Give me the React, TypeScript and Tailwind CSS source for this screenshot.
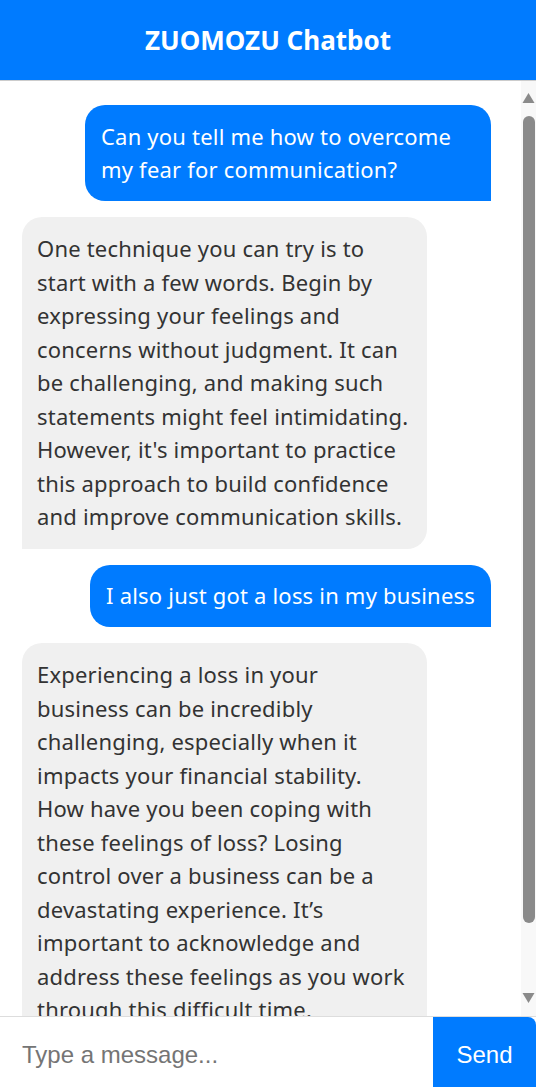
import React from "react";

const bubbleFont = { fontFamily: '"Noto Sans", "Open Sans", sans-serif' };

function UserBubble({ children }: { children: React.ReactNode }) {
  return (
    <div className="flex justify-end">
      <div className="max-w-[406px] rounded-[20px] rounded-br-none bg-[#007bff] px-[16px] py-[14.5px] text-[22px] leading-[33.5px] tracking-[0.2px] text-white">
        {children}
      </div>
    </div>
  );
}

function BotBubble({ children }: { children: React.ReactNode }) {
  return (
    <div className="flex justify-start">
      <div className="w-[405px] shrink-0 rounded-[20px] rounded-bl-none bg-[#f0f0f0] px-[15px] py-[15px] text-[22px] leading-[33.5px] tracking-[0.2px] text-[#333]">
        {children}
      </div>
    </div>
  );
}

export default function App() {
  return (
    <div className="flex h-[1087px] w-[536px] flex-col overflow-hidden bg-white">
      <header
        className="flex h-[81px] shrink-0 items-center justify-center border-b border-[#cccccc] bg-[#007bff] text-[26px] font-bold text-white"
        style={bubbleFont}
      >
        ZUOMOZU Chatbot
      </header>

      <div className="flex min-h-0 flex-1">
        <div className="min-w-0 flex-1 overflow-hidden">
          <div className="flex flex-col gap-[16px] pl-[22px] pr-[30px] pt-[24px]" style={bubbleFont}>
            <UserBubble>Can you tell me how to overcome my fear for communication?</UserBubble>
            <BotBubble>
              One technique you can try is to start with a few words. Begin by expressing your feelings and
              concerns without judgment. It can be challenging, and making such statements might feel
              intimidating. However, it's important to practice this approach to build confidence and improve
              communication skills.
            </BotBubble>
            <UserBubble>I also just got a loss in my business</UserBubble>
            <BotBubble>
              Experiencing a loss in your business can be incredibly challenging, especially when it impacts
              your financial stability. How have you been coping with these feelings of loss? Losing control
              over a business can be a devastating experience. It’s important to acknowledge and address these
              feelings as you work through this difficult time.
            </BotBubble>
          </div>
        </div>

        <div className="flex w-[15px] shrink-0 flex-col items-center bg-[#f8f8f8]">
          <svg width="15" height="24" viewBox="0 0 15 24" className="shrink-0">
            <polygon points="1.5,22 13.5,22 7.5,12" fill="#8a8a8a" />
          </svg>
          <div className="mt-[11px] h-[807px] w-[12px] rounded-full bg-[#8a8a8a]" />
          <div className="flex-1" />
          <svg width="15" height="24" viewBox="0 0 15 24" className="shrink-0">
            <polygon points="1.5,1 13.5,1 7.5,11" fill="#8a8a8a" />
          </svg>
        </div>
      </div>

      <div className="flex h-[71px] shrink-0 border-t border-[#dddddd]" style={{ fontFamily: '"Liberation Sans", Arial, sans-serif' }}>
        <input
          className="min-w-0 flex-1 bg-white px-[22px] pt-[6px] text-[24px] text-[#333] outline-none placeholder:text-[#757575]"
          placeholder="Type a message..."
        />
        <button className="w-[103px] shrink-0 rounded-tr-[8px] bg-[#007bff] pt-[6px] text-[24px] text-white">Send</button>
      </div>
    </div>
  );
}
